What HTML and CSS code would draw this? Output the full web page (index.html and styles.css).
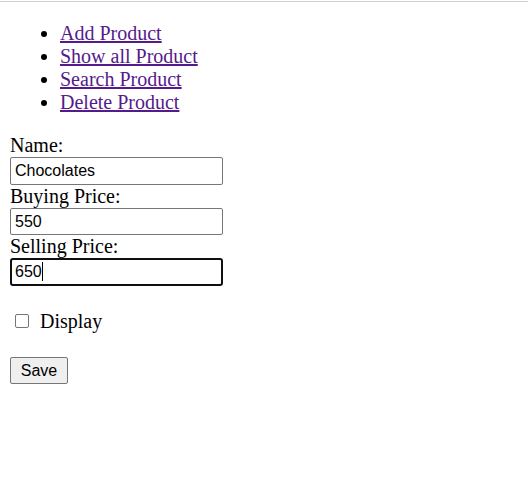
FILE: index.html
```
<!DOCTYPE html>
<html>
<head>
<meta charset="utf-8">
<link rel="stylesheet" href="styles.css">
</head>
<body>
<div class="topline"></div>
<div class="page">
  <ul class="menu">
    <li><a href="#">Add Product</a></li>
    <li><a href="#">Show all Product</a></li>
    <li><a href="#">Search Product</a></li>
    <li><a href="#">Delete Product</a></li>
  </ul>
  <form class="form">
    <label class="lbl">Name:</label>
    <input class="field" type="text" value="Chocolates">
    <label class="lbl">Buying Price:</label>
    <input class="field" type="text" value="550">
    <label class="lbl">Selling Price:</label>
    <div class="focus-wrap">
      <input class="field focused" type="text" value="650">
      <span class="caret"></span>
    </div>
    <div class="check-row">
      <span class="check"></span>
      <span class="check-label">Display</span>
    </div>
    <div class="btn-row"><button class="save" type="button">Save</button></div>
  </form>
</div>
</body>
</html>
```
FILE: styles.css
```
html, body {
  margin: 0;
  padding: 0;
  background: #fff;
}
body {
  font-family: "Liberation Serif", "Times New Roman", serif;
  font-size: 20px;
  line-height: 23px;
  color: #000;
}
.topline {
  height: 1px;
  margin-top: 1px;
  background: #d0d0d0;
}
.page {
  padding: 0 10px;
}
.menu {
  margin: 20px 0 20px 0;
  padding-left: 50px;
}
.menu a {
  color: #551a8b;
  text-decoration: underline;
}
.form {
  display: flex;
  flex-direction: column;
  align-items: flex-start;
}
.lbl {
  display: block;
  height: 23px;
}
.field {
  box-sizing: border-box;
  width: 213px;
  height: 27.7px;
  margin: 0;
  padding: 1px 4px;
  border: 1px solid #767676;
  border-radius: 2px;
  font-family: "Liberation Sans", Arial, sans-serif;
  font-size: 16px;
  color: #000;
  background: #fff;
}
.field.focused {
  border: 2px solid #101010;
  border-radius: 3px;
  padding: 0 3px;
  outline: none;
}
.focus-wrap {
  position: relative;
}
.caret {
  position: absolute;
  left: 32px;
  top: 4px;
  width: 1px;
  height: 19px;
  background: #000;
}
.check-row {
  display: flex;
  align-items: center;
  margin-top: 23px;
  height: 24px;
}
.check {
  box-sizing: border-box;
  width: 14px;
  height: 14px;
  margin: 0 5px 0 5px;
  border: 1px solid #767676;
  border-radius: 2px;
  background: #fff;
}
.check-label {
  padding-left: 6px;
}
.btn-row {
  margin-top: 24px;
}
.save {
  box-sizing: border-box;
  width: 58px;
  height: 27px;
  padding: 1px 6px;
  font-family: "Liberation Sans", Arial, sans-serif;
  font-size: 16px;
  color: #000;
  background: #efefef;
  border: 1px solid #767676;
  border-radius: 2px;
}
```
